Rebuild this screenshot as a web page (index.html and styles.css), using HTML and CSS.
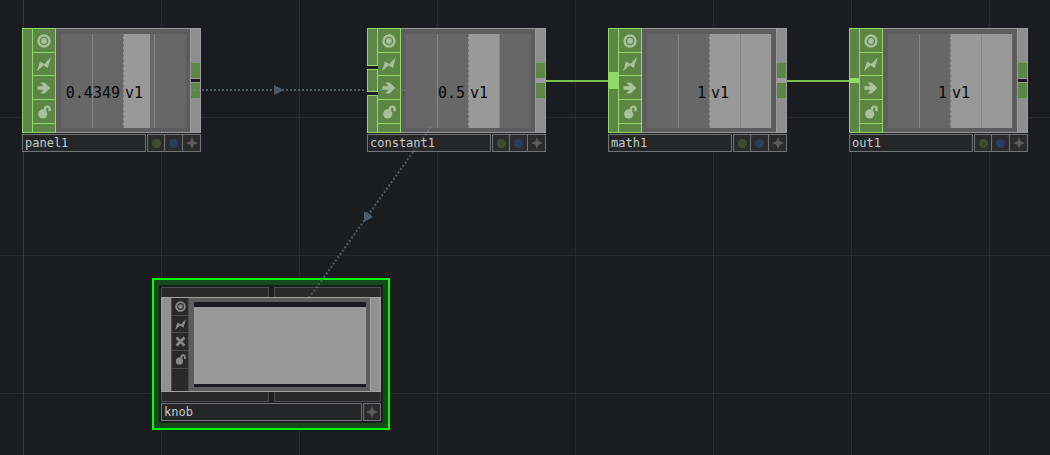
FILE: index.html
```
<!DOCTYPE html>
<html lang="en">
<head>
<meta charset="utf-8">
<title>Network editor</title>
<link rel="stylesheet" href="styles.css">
</head>
<body>
<svg class="symbols" aria-hidden="true">
  <symbol id="i-view" viewBox="0 0 14 14"><circle cx="7" cy="7" r="5.5" fill="none" stroke="currentColor" stroke-width="2.400"/><circle cx="7" cy="7" r="2.900" fill="currentColor"/></symbol>
  <symbol id="i-bolt" viewBox="0 0 14 14"><path fill="currentColor" d="M0 14.200 3 4.400 7.300 7 14 0 10.800 11 6.600 8.300Z"/><path fill="none" stroke="currentColor" stroke-width="1.200" d="M3.200 5.800 7.500 8 10.600 9.800"/></symbol>
  <symbol id="i-arrow" viewBox="0 0 14 14"><path fill="currentColor" d="M0.500 5.300H6.500L3.500 1.500H7.500L13.500 7 7.500 12.500H3.500L6.500 8.700H0.500Z"/></symbol>
  <symbol id="i-lock" viewBox="0 0 14 14"><circle cx="5.700" cy="8.900" r="4.600" fill="currentColor"/><path fill="none" stroke="currentColor" stroke-width="2.400" d="M8 6.500V4C8 .8 12.600 .8 12.600 4V6.300"/></symbol>
  <symbol id="i-cross" viewBox="0 0 14 14"><path fill="none" stroke="currentColor" stroke-width="3.600" d="M2 2 12 12M12 2 2 12"/></symbol>
  <symbol id="i-star" viewBox="0 0 14 14"><path fill="currentColor" d="M7 0 8.900 5.100 14 7 8.900 8.900 7 14 5.100 8.900 0 7 5.100 5.100Z"/></symbol>
</svg>
<main class="network">
  <svg class="wires" aria-hidden="true">
    <path class="wire" d="M546 81H608M787 81H850"/>
  </svg>

  <article class="node panel-node">
    <div class="body">
      <div class="inputs"><i class="slot"></i></div>
      <div class="flags">
        <button aria-label="Viewer"><svg><use href="#i-view"/></svg></button>
        <button aria-label="Cook"><svg><use href="#i-bolt"/></svg></button>
        <button aria-label="Export"><svg><use href="#i-arrow"/></svg></button>
        <button aria-label="Lock"><svg><use href="#i-lock"/></svg></button>
        <i></i>
      </div>
      <div class="viewer"><div class="plot">
        <i class="bar part"></i><i class="tick one"></i><i class="tick zero"></i><i class="tick three"></i>
        <span class="value">0.4349</span><span class="channel">v1</span>
      </div></div>
      <div class="outputs split"><i class="port"></i><i class="port"></i></div>
    </div>
    <div class="footer"><span class="name">panel1</span><button aria-label="Info"><b class="dot green"></b></button><button aria-label="Comment"><b class="dot blue"></b></button><button aria-label="Activate"><svg><use href="#i-star"/></svg></button></div>
  </article>

  <article class="node constant-node">
    <div class="body">
      <div class="inputs"><i class="slot"></i><i class="slot middle"></i><i class="slot"></i></div>
      <div class="flags">
        <button aria-label="Viewer"><svg><use href="#i-view"/></svg></button>
        <button aria-label="Cook"><svg><use href="#i-bolt"/></svg></button>
        <button aria-label="Export"><svg><use href="#i-arrow"/></svg></button>
        <button aria-label="Lock"><svg><use href="#i-lock"/></svg></button>
        <i></i>
      </div>
      <div class="viewer"><div class="plot">
        <i class="bar half"></i><i class="tick one"></i><i class="tick zero"></i><i class="tick three"></i>
        <span class="value">0.5</span><span class="channel">v1</span>
      </div></div>
      <div class="outputs"><i class="port"></i><i class="port"></i></div>
    </div>
    <div class="footer"><span class="name">constant1</span><button aria-label="Info"><b class="dot green"></b></button><button aria-label="Comment"><b class="dot blue"></b></button><button aria-label="Activate"><svg><use href="#i-star"/></svg></button></div>
  </article>

  <article class="node math-node">
    <div class="body">
      <div class="inputs"><i class="slot"><b class="plug large"></b></i></div>
      <div class="flags">
        <button aria-label="Viewer"><svg><use href="#i-view"/></svg></button>
        <button aria-label="Cook"><svg><use href="#i-bolt"/></svg></button>
        <button aria-label="Export"><svg><use href="#i-arrow"/></svg></button>
        <button aria-label="Lock"><svg><use href="#i-lock"/></svg></button>
        <i></i>
      </div>
      <div class="viewer"><div class="plot">
        <i class="bar full"></i><i class="tick one"></i><i class="tick zero"></i><i class="tick three"></i>
        <span class="value">1</span><span class="channel">v1</span>
      </div></div>
      <div class="outputs"><i class="port"></i><i class="port"></i></div>
    </div>
    <div class="footer"><span class="name">math1</span><button aria-label="Info"><b class="dot green"></b></button><button aria-label="Comment"><b class="dot blue"></b></button><button aria-label="Activate"><svg><use href="#i-star"/></svg></button></div>
  </article>

  <article class="node out-node">
    <div class="body">
      <div class="inputs"><i class="slot"><b class="plug"></b></i></div>
      <div class="flags">
        <button aria-label="Viewer"><svg><use href="#i-view"/></svg></button>
        <button aria-label="Cook"><svg><use href="#i-bolt"/></svg></button>
        <button aria-label="Export"><svg><use href="#i-arrow"/></svg></button>
        <button aria-label="Lock"><svg><use href="#i-lock"/></svg></button>
        <i></i>
      </div>
      <div class="viewer"><div class="plot">
        <i class="bar full"></i><i class="tick one"></i><i class="tick zero"></i><i class="tick three"></i>
        <span class="value">1</span><span class="channel">v1</span>
      </div></div>
      <div class="outputs split"><i class="port"></i><i class="port"></i></div>
    </div>
    <div class="footer"><span class="name">out1</span><button aria-label="Info"><b class="dot green"></b></button><button aria-label="Comment"><b class="dot blue"></b></button><button aria-label="Activate"><svg><use href="#i-star"/></svg></button></div>
  </article>

  <article class="component">
    <div class="inner">
      <div class="tabs top"><i></i><i></i></div>
      <div class="comp-body">
        <i class="side"></i>
        <div class="comp-flags">
          <button aria-label="Viewer"><svg><use href="#i-view"/></svg></button>
          <button aria-label="Cook"><svg><use href="#i-bolt"/></svg></button>
          <button aria-label="Bypass"><svg><use href="#i-cross"/></svg></button>
          <button aria-label="Lock"><svg><use href="#i-lock"/></svg></button>
          <i></i>
        </div>
        <div class="preview"><i class="surface"></i></div>
        <i class="side right"></i>
      </div>
      <div class="tabs bottom"><i></i><i></i></div>
      <div class="footer"><span class="name">knob</span><button aria-label="Activate"><svg><use href="#i-star"/></svg></button></div>
    </div>
  </article>

  <svg class="wires" aria-hidden="true">
    <path class="link" d="M202 90H366M413 152 322 280"/>
    <path class="link faint" d="M190 90H201M368 90H406M431 127 413 152M322 280 308 299"/>
    <path class="head" d="M274 85 284 90 274 95ZM364 222 364 212 367 212 373 217Z"/>
  </svg>
</main>
</body>
</html>
```

FILE: styles.css
```
* { box-sizing: border-box; }
body { margin: 0; background: #1b1c20; font-family: "DejaVu Sans Mono", monospace; }
button { margin: 0; padding: 0; border: 0; background: none; color: inherit; font: inherit; display: grid; place-items: center; }
.symbols { position: absolute; width: 0; height: 0; }

.network {
  position: relative;
  min-height: 100vh;
  overflow: hidden;
  background:
    linear-gradient(#34344a, #34344a) 23px 0 / 1px 100% no-repeat,
    repeating-linear-gradient(90deg, #292a2e 0 1px, transparent 1px 138px) 23px 0,
    repeating-linear-gradient(#292a2e 0 1px, transparent 1px 138px) 0 117px / 100% 414px,
    #1b1c20;
}
.wires { position: absolute; inset: 0; width: 100%; height: 100%; pointer-events: none; }
.wire { stroke: #79bf4e; stroke-width: 2; }
.link { stroke: #4f5e69; stroke-width: 2; stroke-dasharray: 2 2; fill: none; }
.faint { stroke: #8b969e; opacity: 0.4; }
.head { fill: #4b5b68; }

.node { position: absolute; top: 28px; width: 179px; }
.panel-node { left: 22px; }
.constant-node { left: 367px; }
.math-node { left: 608px; }
.out-node { left: 849px; }

.body { display: flex; height: 105px; }
.inputs { display: flex; flex-direction: column; gap: 3px; width: 11px; }
.slot { flex: 38; display: grid; align-items: center; background: #5d8545; border: 1px solid #90da68; }
.slot.middle { flex: 23; }
.plug { height: 5px; background: #90da68; }
.plug.large { height: 17px; }
.flags {
  display: grid;
  grid-template-rows: 23px 22px 23px 23px 1fr;
  gap: 1px;
  width: 23px;
  padding: 1px 1px 1px 0;
  background: #90da68;
}
.flags > * { background: #5d8545; color: #a8c29a; }
.flags svg { width: 14px; height: 14px; }
.viewer { flex: 1; padding: 5px 4px 4px 5px; background: #5d5d5d; border-top: 1px solid #9b9b9f; border-bottom: 1px solid #9b9b9f; }
.plot {
  position: relative;
  display: grid;
  grid-template-columns: 59px 1fr;
  column-gap: 5px;
  align-items: end;
  height: 100%;
  padding-bottom: 26px;
  background: #676767;
  color: #080808;
  font-size: 15px;
  line-height: 18px;
}
.value { position: relative; text-align: right; }
.channel { position: relative; }
.bar { position: absolute; left: 62px; top: 0; bottom: 0; background: #999; }
.bar.part { width: 27px; }
.bar.half { width: 31px; }
.bar.full { width: 62px; }
.tick { position: absolute; top: 0; bottom: 0; border-left: 1px solid #858585; }
.one { left: 31px; }
.zero { left: 62px; border-left: 1px dashed #777; }
.three { left: 93px; }
.outputs {
  display: flex;
  flex-direction: column;
  justify-content: center;
  gap: 5px;
  width: 11px;
  border: 1px solid #9b9b9f;
  background: linear-gradient(#9b9b9f, #9b9b9f) center / 100% 5px no-repeat, #8e8e8e;
}
.port { height: 15px; background: #5d8545; }
.split { background: linear-gradient(#9b9b9f 0 1px, #1b1c20 1px 4px, #9b9b9f 4px) center / 100% 5px no-repeat, #8e8e8e; }

.footer { display: flex; align-items: stretch; height: 18px; margin-top: 1px; color: #c9c9c9; font-size: 12px; line-height: 16px; }
.name { flex: 1; margin-right: 1px; padding-left: 2px; border: 1px solid #717476; background: #242628; }
.footer button { width: 18px; border: 1px solid #717476; background: #2b2b2b; color: #5c5c5c; }
.footer button + button { border-left: 0; }
.footer svg { width: 12px; height: 12px; }
.dot { width: 9px; height: 9px; border-radius: 50%; }
.green { background: #404b36; }
.blue { background: #2d3c5c; }

.component { position: absolute; left: 152px; top: 278px; width: 238px; padding: 5px; border: 2px solid #00ff00; background: #174a1a; }
.inner { padding: 2px; background: #1b1c20; }
.tabs { display: flex; gap: 5px; height: 10px; }
.tabs i { flex: 1; border: 1px solid #4c4c50; background: #292929; }
.top i { border-bottom: 0; }
.bottom i { border-top: 0; }
.comp-body { display: flex; height: 95px; border: 1px solid #a2a2a2; }
.side { width: 9px; background: #919191; }
.right { width: 10px; border-left: 1px solid #a2a2a2; }
.comp-flags { display: grid; grid-template-rows: 17px 16px 17px 17px 1fr; gap: 1px; width: 18px; padding: 0 1px; background: #4c4c50; }
.comp-flags > * { background: #292929; color: #888; }
.comp-flags svg { width: 11px; height: 11px; }
.preview { flex: 1; padding: 4px 4px 4px 5px; background: #5d5d5d; }
.surface { display: block; height: 100%; background: #999; border: solid #1a1b21; border-width: 5px 0 3px; }
```
